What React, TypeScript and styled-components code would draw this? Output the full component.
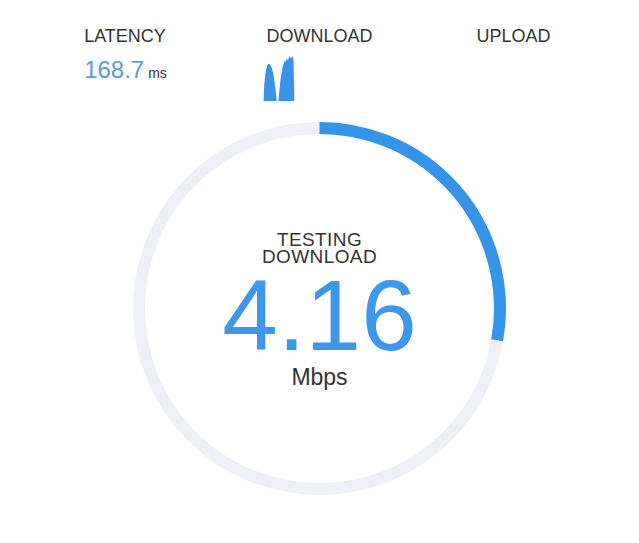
import React from "react";
import styled, { createGlobalStyle } from "styled-components";

const GlobalStyle = createGlobalStyle`
  html, body {
    margin: 0;
    padding: 0;
    background: #ffffff;
  }
  body {
    font-family: "Liberation Sans", Arial, sans-serif;
    color: #333333;
  }
`;

const Page = styled.div`
  width: 639px;
  height: 543px;
  overflow: hidden;
`;

const Stats = styled.div`
  box-sizing: border-box;
  height: 122px;
  width: 582px;
  margin: 0 auto;
  padding-top: 26px;
  display: grid;
  grid-template-columns: repeat(3, 194px);
  align-items: start;
`;

const Stat = styled.div`
  justify-self: center;
  display: flex;
  flex-direction: column;
  align-items: flex-start;
`;

const Label = styled.div`
  font-size: 18px;
  line-height: 21px;
  color: #333333;
  white-space: nowrap;
`;

const Value = styled.div`
  margin-top: 9px;
  font-size: 24px;
  line-height: 28px;
  color: #5b9bd1;
  white-space: nowrap;
`;

const Unit = styled.span`
  font-size: 14px;
  color: #333333;
  margin-left: 4px;
`;

const Graph = styled.svg`
  display: block;
  margin-top: 8px;
  margin-left: -3px;
`;

const Gauge = styled.div`
  width: 373px;
  height: 373px;
  margin: 0 auto;
  display: grid;
`;

const Ring = styled.svg`
  grid-area: 1 / 1;
  display: block;
`;

const Center = styled.div`
  grid-area: 1 / 1;
  display: flex;
  flex-direction: column;
  align-items: center;
  padding-top: 108.5px;
`;

const Status = styled.div`
  font-size: 19px;
  line-height: 17px;
  letter-spacing: 0.4px;
  text-align: center;
  color: #333333;
`;

const Speed = styled.div`
  margin-top: 6px;
  font-size: 100px;
  line-height: 88px;
  color: #3e97e9;
`;

const SpeedUnit = styled.div`
  margin-top: 4px;
  font-size: 23px;
  line-height: 28px;
  color: #333333;
`;

const SIZE = 373;
const STROKE = 12;
const R = SIZE / 2 - STROKE / 2;
const C = 2 * Math.PI * R;
const PROGRESS = 0.278;

export default function App() {
  return (
    <Page>
      <GlobalStyle />
      <Stats>
        <Stat>
          <Label>LATENCY</Label>
          <Value>
            168.7<Unit>ms</Unit>
          </Value>
        </Stat>
        <Stat>
          <Label>DOWNLOAD</Label>
          <Graph width="34" height="46" viewBox="0 0 34 46">
            <path
              fill="#3a93e8"
              d="M0.6,46 L1.2,30 L2.6,17 L4,11 L5.4,8.6 L7,9.4 L8.6,12.5 L10.2,18 L11.6,27 L12.8,37 L13.8,46 Z"
            />
            <path
              fill="#3a93e8"
              d="M15.4,46 L16.4,36 L17.6,24 L19,15 L20.3,9.5 L21.5,6 L22.6,6.8 L23.8,3.4 L25,5.2 L26.5,1.2 L27.8,3.6 L29.3,1 L30.5,5 L31.4,46 Z"
            />
          </Graph>
        </Stat>
        <Stat>
          <Label>UPLOAD</Label>
        </Stat>
      </Stats>
      <Gauge>
        <Ring width={SIZE} height={SIZE} viewBox={`0 0 ${SIZE} ${SIZE}`}>
          <circle
            cx={SIZE / 2}
            cy={SIZE / 2}
            r={R}
            fill="none"
            stroke="#eef0f5"
            strokeWidth={STROKE}
          />
          <circle
            cx={SIZE / 2}
            cy={SIZE / 2}
            r={R}
            fill="none"
            stroke="#3593e8"
            strokeWidth={STROKE}
            strokeDasharray={`${C * PROGRESS} ${C}`}
            transform={`rotate(-90 ${SIZE / 2} ${SIZE / 2})`}
          />
        </Ring>
        <Center>
          <Status>
            TESTING
            <br />
            DOWNLOAD
          </Status>
          <Speed>4.16</Speed>
          <SpeedUnit>Mbps</SpeedUnit>
        </Center>
      </Gauge>
    </Page>
  );
}
